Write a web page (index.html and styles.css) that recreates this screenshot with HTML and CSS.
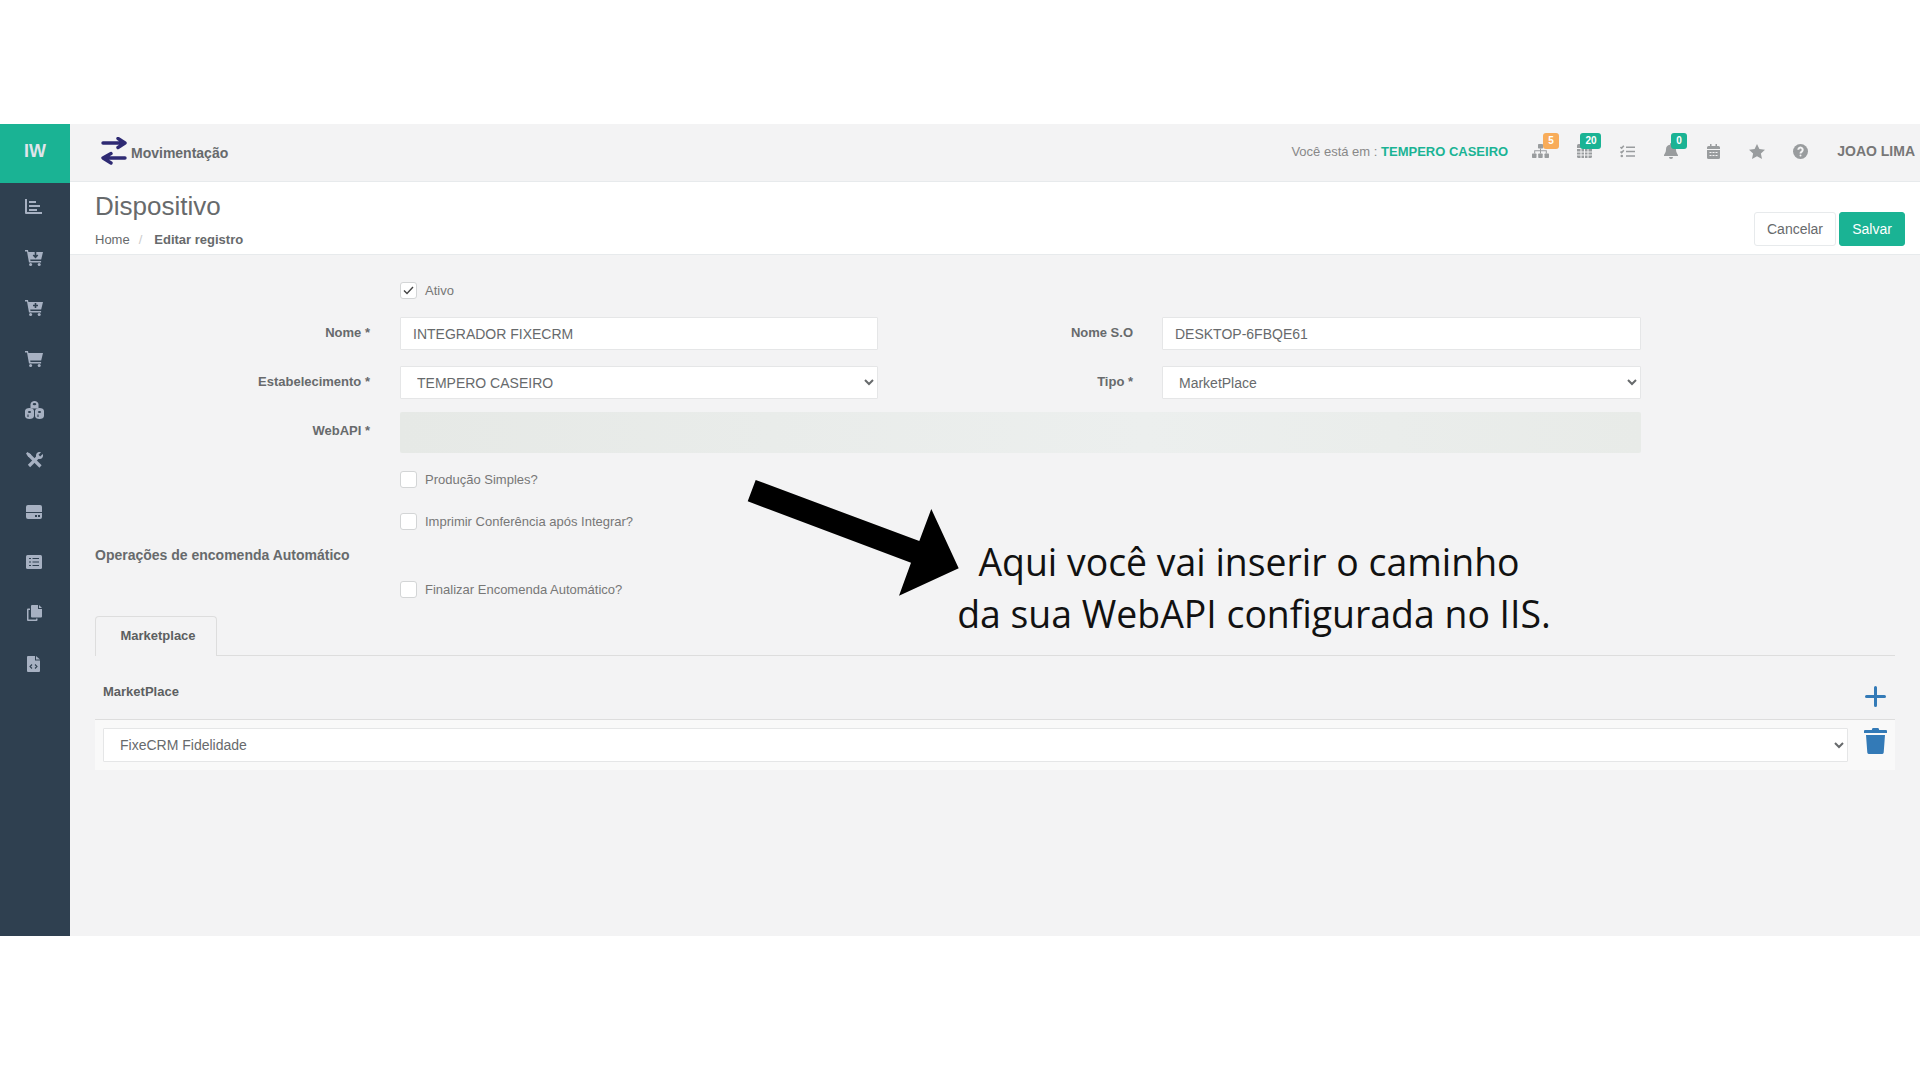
FILE: index.html
```html
<!DOCTYPE html>
<html lang="pt-BR">
<head>
    <meta charset="UTF-8">
    <title>Dispositivo</title>
    <link rel="stylesheet" href="styles.css">
</head>
<body>
<div class="app">
    <aside class="sidebar">
        <div class="logo">IW</div>
        <nav class="side-nav">
            <a class="side-item"><svg class="nudge" width="17" height="15" viewBox="0 0 17 15"><path d="M0 0h2v13h15v2H1a1 1 0 0 1-1-1z"/><rect x="4" y="2" width="7" height="2"/><rect x="4" y="6" width="11" height="2"/><rect x="4" y="10" width="8" height="2"/></svg></a>
            <a class="side-item"><svg width="18" height="16" viewBox="0 0 18 16"><path d="M0 0h3l.4 2H18l-1.8 7.6H5.2l.3 1.4h10.6v1.6H4L2 1.6H0z"/><circle cx="5.6" cy="14.5" r="1.5"/><circle cx="14.2" cy="14.5" r="1.5"/><path class="cut" d="M10.500 2v5M8.300 5l2.200 2.400L12.700 5"/></svg></a>
            <a class="side-item"><svg width="18" height="16" viewBox="0 0 18 16"><path d="M0 0h3l.4 2H18l-1.8 7.600H5.200l.3 1.400h10.600v1.600H4L2 1.600H0z"/><circle cx="5.600" cy="14.500" r="1.500"/><circle cx="14.200" cy="14.500" r="1.500"/><path class="cut" d="M10.500 3v5M8 5.500h5"/></svg></a>
            <a class="side-item"><svg width="18" height="16" viewBox="0 0 18 16"><path d="M0 0h3l.4 2H18l-1.800 7.600H5.200l.3 1.400h10.600v1.600H4L2 1.600H0z"/><circle cx="5.600" cy="14.500" r="1.500"/><circle cx="14.200" cy="14.500" r="1.500"/></svg></a>
            <a class="side-item"><svg width="19" height="18" viewBox="0 0 19 18"><path d="M5.500 3.500C5.500 1.500 7.500 0 9.500 0s4 1.500 4 3.500v4h-8z"/><path d="M0 10c0-1.800 2-3 4.500-3S9 8.200 9 10v5c0 1.800-2 3-4.500 3S0 16.800 0 15z"/><path d="M10 10c0-1.800 2-3 4.500-3S19 8.200 19 10v5c0 1.800-2 3-4.500 3S10 16.800 10 15z"/><ellipse class="hole" cx="9.500" cy="3.200" rx="1.800" ry="1.100"/><ellipse class="hole" cx="4.500" cy="11" rx="1.600" ry="1.100"/><ellipse class="hole" cx="14.500" cy="11" rx="1.600" ry="1.100"/><path class="cut thin" d="M3 13.500V16M13 13.500V16"/></svg></a>
            <a class="side-item"><svg width="17" height="17" viewBox="0 0 17 17"><path class="bar" d="M2.500 2.500l12 12"/><path class="bar" d="M12 5L3 14"/><path d="M0 1.500L1.500 0l3.500 2.500V5H2.500z"/><path d="M10 6.500V3.500A3.500 3.500 0 0 1 15 .3L12.500 2.800l1.700 1.700L16.700 2A3.500 3.500 0 0 1 13.500 7z"/></svg></a>
            <a class="side-item"><svg width="16" height="14" viewBox="0 0 16 14"><path d="M2 0h12a2 2 0 0 1 2 2v5H0V2a2 2 0 0 1 2-2z"/><path d="M0 8h16v4a2 2 0 0 1-2 2H2a2 2 0 0 1-2-2z"/><rect class="hole" x="9" y="10" width="2" height="2"/><rect class="hole" x="12" y="10" width="2" height="2"/></svg></a>
            <a class="side-item"><svg width="16" height="14" viewBox="0 0 16 14"><rect width="16" height="14" rx="1.500"/><path class="cut thin" d="M3 3.500h2M3 7h2M3 10.500h2M6.500 3.500H13M6.500 7H13M6.500 10.500H13"/></svg></a>
            <a class="side-item"><svg width="15" height="16" viewBox="0 0 15 16"><path d="M5 0h6v4h4v7.500a1 1 0 0 1-1 1H5a1 1 0 0 1-1-1V1a1 1 0 0 1 1-1z"/><path d="M12 0l3 3h-3z"/><path d="M0 4.500a1 1 0 0 1 1-1h2v1.500H1.500v9.500H9V13.500h1.500V15a1 1 0 0 1-1 1H1a1 1 0 0 1-1-1z"/></svg></a>
            <a class="side-item"><svg class="nudge" width="13" height="16" viewBox="0 0 13 16"><path d="M1 0h7v4.500h5V15a1 1 0 0 1-1 1H1a1 1 0 0 1-1-1V1a1 1 0 0 1 1-1z"/><path d="M9 0l4 3.500H9z"/><path class="cut thin" d="M5 8.500L3 10.500l2 2M8 8.500l2 2-2 2"/></svg></a>
        </nav>
    </aside>

    <div class="main">
        <header class="topbar">
            <div class="module">
                <svg class="module-icon" width="26" height="28" viewBox="0 0 26 28"><path d="M2 6h22M17 1.500L24 6l-7 4.500M24 21H3M10 16.500L2 21l8 5"/></svg>
                <span>Movimentação</span>
            </div>
            <div class="where">Você está em : <b>TEMPERO CASEIRO</b></div>
            <div class="top-icons">
                <a class="top-item"><svg width="17" height="14" viewBox="0 0 17 14"><rect x="6" y="0" width="5" height="4.500" rx=".7"/><rect x="0" y="9.500" width="4.500" height="4.500" rx=".7"/><rect x="6.200" y="9.500" width="4.500" height="4.500" rx=".7"/><rect x="12.500" y="9.500" width="4.500" height="4.500" rx=".7"/><path d="M8 4.500h1V6.300h5.800v3.200h-1V7.300H9v2.200H8V7.300H3.200v2.200h-1V6.300H8z"/></svg><span class="badge badge-orange">5</span></a>
                <a class="top-item"><svg width="15" height="14" viewBox="0 0 15 14"><rect width="15" height="14" rx="1.500"/><path class="cut thin" d="M0 4.500h15M0 8h15M0 11h15M4 4.500V14M7.500 4.500V14M11 4.500V14"/></svg><span class="badge badge-green badge-wide">20</span></a>
                <a class="top-item"><svg width="15" height="13" viewBox="0 0 15 13"><path class="stroke" d="M.5 2l1.200 1.200L3.800.8M.5 6.500l1.200 1.200 2.100-2.400M6 2.200h9M6 6.500h9M6 11h9"/><circle cx="1.800" cy="11" r="1.300"/></svg></a>
                <a class="top-item"><svg width="14" height="16" viewBox="0 0 14 16"><path d="M7 0a1 1 0 0 1 1 1v.7A4.700 4.700 0 0 1 12 6.300c0 3.800 2 4.900 2 6.200v.5H0v-.5c0-1.300 2-2.400 2-6.200A4.700 4.700 0 0 1 6 1.700V1a1 1 0 0 1 1-1z"/><path d="M5 14h4a2 2 0 0 1-4 0z"/></svg><span class="badge badge-green badge-bell">0</span></a>
                <a class="top-item"><svg width="13" height="15" viewBox="0 0 13 15"><path d="M3 0h1.500v2h4V0H10v2h1.500A1.500 1.500 0 0 1 13 3.500V5H0V3.500A1.500 1.500 0 0 1 1.500 2H3z"/><path d="M0 6h13v7.500a1.500 1.500 0 0 1-1.500 1.500h-10A1.500 1.500 0 0 1 0 13.500z"/><path class="cut thin" d="M2.500 8.500h2M5.500 8.500h2M8.500 8.500h2M2.500 11.500h2M5.500 11.500h2M8.500 11.500h2"/></svg></a>
                <a class="top-item"><svg width="16" height="15" viewBox="0 0 16 15"><path d="M8 0l2.400 5 5.600.7-4.100 3.800 1.100 5.500L8 12.300 3 15l1.100-5.500L0 5.700 5.600 5z"/></svg></a>
                <a class="top-item"><svg width="15" height="15" viewBox="0 0 15 15"><circle cx="7.500" cy="7.500" r="7.500"/><path class="cut" d="M5.300 5.800a2.200 2.200 0 1 1 3.500 1.800c-.9.600-1.300 1-1.300 1.900"/><circle class="hole" cx="7.500" cy="11.500" r="1"/></svg></a>
            </div>
            <div class="user">JOAO LIMA</div>
        </header>

        <section class="page-head">
            <div>
                <h1>Dispositivo</h1>
                <div class="crumbs"><span>Home</span><i>/</i><strong>Editar registro</strong></div>
            </div>
            <div class="actions">
                <button class="btn btn-white">Cancelar</button>
                <button class="btn btn-green">Salvar</button>
            </div>
        </section>

        <section class="content">
            <div class="form-row row-ativo">
                <div class="label"></div>
                <label class="check"><span class="box"><svg width="11" height="9" viewBox="0 0 11 9"><path d="M1 4.500l3 3L10 1"/></svg></span>Ativo</label>
            </div>
            <div class="form-row row-nome">
                <div class="label">Nome *</div>
                <input class="field" value="INTEGRADOR FIXECRM">
                <div class="label label-2">Nome S.O</div>
                <input class="field" value="DESKTOP-6FBQE61">
            </div>
            <div class="form-row row-estab">
                <div class="label">Estabelecimento *</div>
                <select class="field"><option>TEMPERO CASEIRO</option></select>
                <div class="label label-2">Tipo *</div>
                <select class="field"><option>MarketPlace</option></select>
            </div>
            <div class="form-row row-webapi">
                <div class="label">WebAPI *</div>
                <div class="blurred"></div>
            </div>
            <div class="form-row row-prod">
                <div class="label"></div>
                <label class="check"><span class="box"></span>Produção Simples?</label>
            </div>
            <div class="form-row row-print">
                <div class="label"></div>
                <label class="check"><span class="box"></span>Imprimir Conferência após Integrar?</label>
            </div>
            <h2 class="group-title">Operações de encomenda Automático</h2>
            <div class="form-row row-final">
                <div class="label"></div>
                <label class="check"><span class="box"></span>Finalizar Encomenda Automático?</label>
            </div>

            <div class="tabs"><div class="tab">Marketplace</div></div>
            <div class="panel-head">
                <span>MarketPlace</span>
                <svg class="add" width="21" height="21" viewBox="0 0 21 21"><path d="M10.500 1.500v18M1.500 10.500h18"/></svg>
            </div>
            <div class="panel-row">
                <select class="field field-wide"><option>FixeCRM Fidelidade</option></select>
                <svg class="trash" width="23" height="26" viewBox="0 0 23 26"><path d="M8 2a1.500 1.500 0 0 1 1.500-2h4A1.500 1.500 0 0 1 15 2h7a1 1 0 0 1 1 1v2H0V3a1 1 0 0 1 1-1z"/><path d="M2 7h19l-1.300 17.500A1.600 1.600 0 0 1 18 26H5a1.600 1.600 0 0 1-1.700-1.500z"/></svg>
            </div>
        </section>
    </div>

    <!-- annotation drawn on top of the screen -->
    <svg class="note-arrow" width="230" height="130" viewBox="740 475 230 130"><polygon points="755.7,480 747.7,501.300 911,562.700 899,595.700 958.700,568.300 931.300,509 919.300,541"/></svg>
    <div class="note-text"><p>Aqui você vai inserir o caminho</p><p class="second">da sua WebAPI configurada no IIS.</p></div>
</div>
</body>
</html>
```

FILE: styles.css
```css
* {
    box-sizing: border-box;
}

html, body {
    margin: 0;
    height: 100%;
    overflow: hidden;
    background: #fff;
}

body {
    padding-top: 124px;
    font-family: "Liberation Sans", Arial, sans-serif;
    font-size: 13px;
    color: #676a6c;
}

.app {
    position: relative;
    display: flex;
    height: 812px;
    background: #f3f3f4;
}

/* sidebar */
.sidebar {
    width: 70px;
    flex: none;
    background: #2f4050;
}

.logo {
    height: 59px;
    background: #1ab394;
    color: #dfe4ea;
    font-size: 18px;
    font-weight: bold;
    display: flex;
    align-items: center;
    justify-content: center;
    padding-bottom: 4px;
}

.side-item {
    height: 50.8px;
    display: flex;
    align-items: center;
    justify-content: center;
}

.side-item svg {
    fill: #a7b1c2;
    margin: -3px 2px 0 0;
}

.side-item svg.nudge {
    margin-right: 4px;
}

.side-item .cut {
    fill: none;
    stroke: #2f4050;
    stroke-width: 1.6;
}

.side-item .cut.thin {
    stroke-width: 1.1;
}

.side-item .hole {
    fill: #2f4050;
}

.side-item .bar {
    fill: none;
    stroke: #a7b1c2;
    stroke-width: 3.2;
}

/* top bar */
.main {
    flex: 1;
    min-width: 0;
}

.topbar {
    height: 58px;
    display: flex;
    align-items: center;
    border-bottom: 1px solid #e7eaec;
    padding: 0 5px 4px 31px;
}

.module {
    display: flex;
    align-items: center;
    gap: 4px;
    margin-top: 1px;
    font-size: 14px;
    font-weight: bold;
}

.module span {
    margin-top: 3px;
}

.module-icon {
    fill: none;
    stroke: #2e2a73;
    stroke-width: 3.4;
    stroke-linecap: round;
    stroke-linejoin: round;
}

.where {
    margin: 1px 0 0 auto;
    font-size: 13px;
    color: #888;
}

.where b {
    font-weight: bold;
    color: #1ab394;
}

.top-icons {
    display: flex;
    margin: 0 15px 0 11px;
}

.top-item {
    position: relative;
    width: 43.3px;
    height: 30px;
    display: flex;
    align-items: center;
    justify-content: center;
}

.top-item svg {
    fill: #999c9e;
    margin-top: 1px;
}

.top-item .stroke {
    fill: none;
    stroke: #999c9e;
    stroke-width: 1.6;
}

.top-item .cut {
    fill: none;
    stroke: #f3f3f4;
    stroke-width: 2;
}

.top-item .cut.thin {
    stroke-width: 1;
}

.top-item .hole {
    fill: #f3f3f4;
}

.badge {
    position: absolute;
    top: -3px;
    left: 24px;
    min-width: 16px;
    height: 16px;
    padding: 0 3px;
    border-radius: 3px;
    color: #fff;
    font-size: 10px;
    font-weight: bold;
    line-height: 15px;
    text-align: center;
}

.badge-orange {
    background: #f8ac59;
}

.badge-green {
    background: #1ab394;
}

.badge-wide {
    left: 18px;
    width: 21px;
}

.badge-bell {
    left: 22px;
}

.user {
    font-size: 14px;
    font-weight: bold;
    color: #777;
}

/* page heading */
.page-head {
    height: 73px;
    background: #fff;
    border-bottom: 1px solid #e7eaec;
    padding: 0 15px 0 25px;
    display: flex;
    justify-content: space-between;
}

.page-head h1 {
    margin: 10px 0 0;
    font-size: 26px;
    font-weight: normal;
    line-height: 28px;
}

.crumbs {
    margin-top: 12px;
    font-size: 13px;
    line-height: 16px;
}

.crumbs i {
    font-style: normal;
    color: #ccc;
    margin: 0 12px 0 9px;
}

.crumbs strong {
    font-weight: bold;
}

.actions {
    display: flex;
    gap: 3px;
    padding-top: 30px;
}

.btn {
    height: 34px;
    border-radius: 3px;
    border: 1px solid #e7eaec;
    font: 14px "Liberation Sans", Arial, sans-serif;
}

.btn-white {
    width: 82px;
    background: #fff;
    color: #676a6c;
}

.btn-green {
    width: 66px;
    background: #1ab394;
    border-color: #1ab394;
    color: #fff;
}

/* form */
.content {
    padding: 0 25px;
}

.form-row {
    display: flex;
    align-items: center;
}

.label {
    width: 275px;
    flex: none;
    margin-right: 30px;
    text-align: right;
    font-weight: bold;
    padding-bottom: 3px;
}

.label-2 {
    width: 255px;
    margin-right: 29px;
}

.field {
    width: 478px;
    height: 33px;
    flex: none;
    padding: 0 12px;
    background: #fff;
    border: 1px solid #e5e6e7;
    border-radius: 1px;
    font: 14px "Liberation Sans", Arial, sans-serif;
    color: #676a6c;
}

.label-2 + .field {
    width: 479px;
}

.blurred {
    width: 1241px;
    height: 41px;
    border-radius: 2px;
    background: linear-gradient(90deg, #e6e9e6, #ecefee 60%, #e8ebe8);
}

.check {
    display: flex;
    align-items: center;
    height: 18px;
    gap: 8px;
    font-size: 13px;
    color: #777;
}

.box {
    width: 17px;
    height: 17px;
    background: #fff;
    border: 1px solid #d3d5d6;
    border-radius: 3px;
    display: flex;
    align-items: center;
    justify-content: center;
}

.box svg {
    fill: none;
    stroke: #444;
    stroke-width: 1.4;
}

.row-ativo {
    padding-top: 26px;
}

.row-nome {
    margin-top: 18px;
}

.row-estab {
    margin-top: 16px;
}

.row-webapi {
    margin-top: 13px;
}

.row-webapi .label {
    padding-bottom: 5px;
}

.row-prod {
    margin-top: 17px;
}

.row-print {
    margin-top: 24px;
}

.row-final {
    margin-top: 17px;
}

.group-title {
    margin: 17px 0 0;
    font-size: 14px;
    font-weight: bold;
    line-height: 16px;
}

/* tabs and panel */
.tabs {
    margin-top: 18px;
    height: 40px;
    border-bottom: 1px solid #ddd;
}

.tab {
    width: 122px;
    height: 40px;
    padding-left: 4px;
    border: 1px solid #ddd;
    border-bottom: 0;
    border-radius: 4px 4px 0 0;
    background: #f3f3f4;
    font-weight: bold;
    text-align: center;
    line-height: 38px;
    color: #5c5f61;
}

.panel-head {
    height: 63px;
    padding: 0 9px 0 8px;
    display: flex;
    align-items: flex-start;
    justify-content: space-between;
    font-weight: bold;
    color: #5c5f61;
}

.panel-head span {
    margin-top: 28px;
}

.add {
    margin-top: 30px;
    fill: none;
    stroke: #337ab7;
    stroke-width: 3;
    stroke-linecap: round;
}

.panel-row {
    height: 51px;
    border-top: 1px solid #ddd;
    background: #f9f9f9;
    padding: 8px 8px 0;
    display: flex;
    justify-content: space-between;
    align-items: flex-start;
}

.field-wide {
    width: 1745px;
    height: 34px;
}

.trash {
    fill: #337ab7;
}

/* annotation */
.note-arrow {
    position: absolute;
    left: 740px;
    top: 351px;
    fill: #000;
}

.note-text {
    position: absolute;
    left: 899px;
    top: 412px;
    width: 700px;
    text-align: center;
    font-family: "Open Sans", sans-serif;
    font-size: 37.4px;
    line-height: 52px;
    color: #111;
}

.note-text p {
    margin: 0;
}

.note-text .second {
    padding-left: 10px;
}
```
